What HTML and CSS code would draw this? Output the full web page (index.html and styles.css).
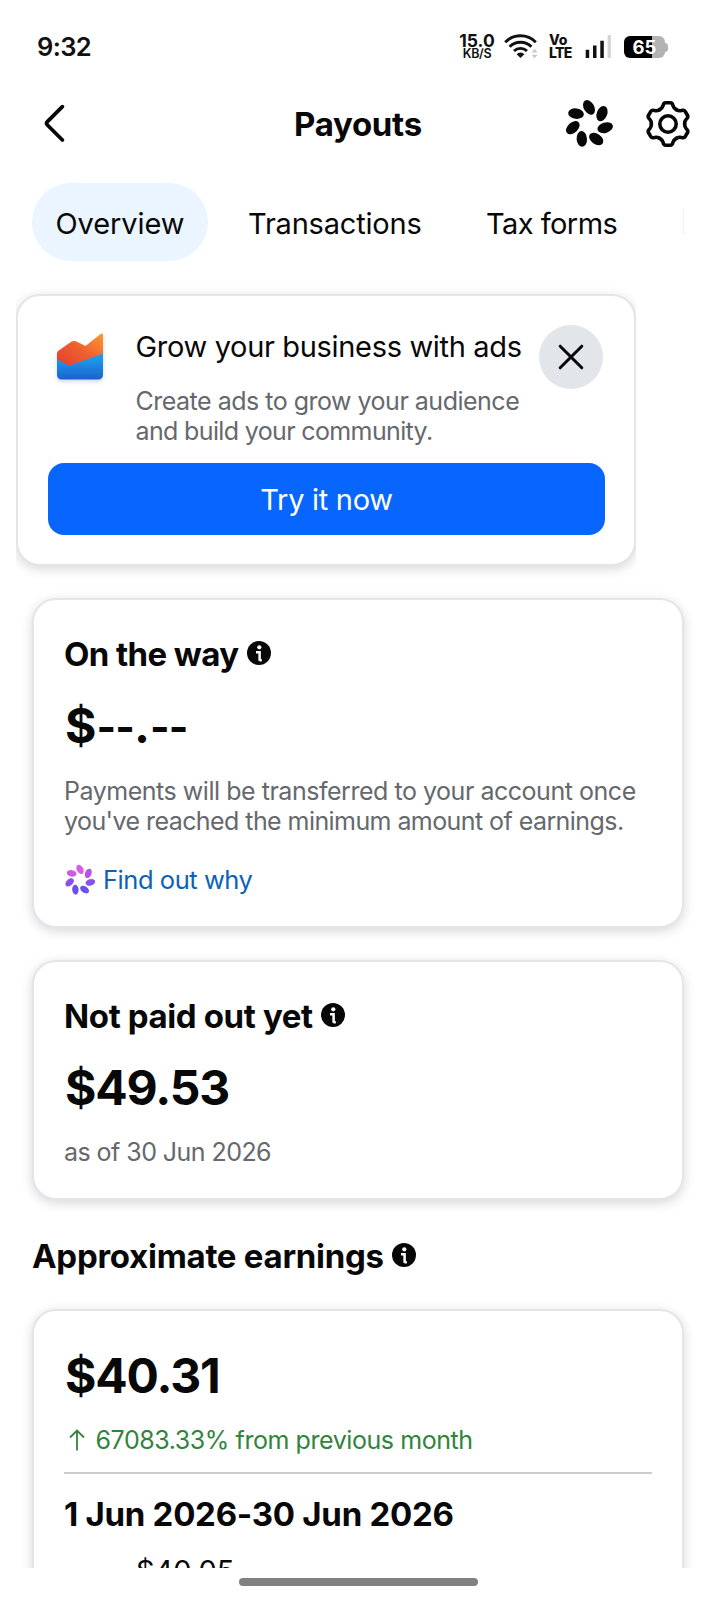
FILE: index.html
```
<!DOCTYPE html>
<html lang="en">
<head>
<meta charset="utf-8">
<title>Payouts</title>
<link rel="stylesheet" href="styles.css">
</head>
<body>
<svg class="defs" width="0" height="0" aria-hidden="true">
  <defs>
    <linearGradient id="orange" x1="0" y1="1" x2="1" y2="0"><stop offset="0.1" stop-color="#e6452f"/><stop offset="0.5" stop-color="#ee6030"/><stop offset="1" stop-color="#ff9a2e"/></linearGradient>
    <linearGradient id="blue" x1="0" y1="0" x2="0" y2="1"><stop offset="0" stop-color="#1ea0f2"/><stop offset="0.3" stop-color="#1e96ea"/><stop offset="1" stop-color="#1a62cc"/></linearGradient>
    <symbol id="info" viewBox="0 0 24 24"><circle cx="12" cy="12" r="12" fill="#080809"/><circle cx="12.300" cy="6.300" r="2.100" fill="#fff"/><path d="M9 11.300h3.600v8.400M12.600 19.300h2.200" fill="none" stroke="#fff" stroke-width="2.500"/></symbol>
    <path id="tooth" d="M-8.300-14.400Q-5.600-15.900-5-18.200Q-4.400-21.200-2.400-21.200H2.400Q4.400-21.200 5-18.200Q5.600-15.900 8.300-14.400"/>
  </defs>
</svg>
<div class="screen">
  <header class="status">
    <span class="time t">9:32</span>
    <div class="indicators">
      <div class="stack speed"><b class="t">15.0</b><span class="t">KB/S</span></div>
      <svg class="wifi" width="34" height="26" viewBox="0 0 34 26"><g fill="none" stroke="#111" stroke-width="2.9"><path d="M1.2 9.2a21.5 21.5 0 0 1 30.6 0"/><path d="M5.6 13.8a15.4 15.4 0 0 1 21.8 0"/><path d="M10 18a9.4 9.4 0 0 1 13 0"/></g><path d="M12.6 21.2a5.6 5.6 0 0 1 7.8 0L16.5 25z" fill="#111"/><path d="M27.6 19.4l3-3.6 3 3.6zM27.6 21.8l3 3.6 3-3.6z" fill="#ccc"/></svg>
      <div class="stack volte"><b class="t">Vo</b><b class="t">LTE</b></div>
      <svg class="signal" width="26" height="24" viewBox="0 0 26 24"><path d="M.7 14.8h3.5V23H.7zM8 10.4h3.5V23H8zM15.3 5.8h3.5V23h-3.5z" fill="#111"/><path d="M22.6 0h3.3v23h-3.3z" fill="#d4d4d4"/></svg>
      <div class="battery"><span class="t">65</span></div><i class="nub"></i>
    </div>
  </header>

  <nav class="appbar">
    <svg class="back" width="30" height="44" viewBox="0 0 30 44"><path d="M22.4 5.7L7.4 20.6Q5.8 22.3 7.4 24L22.4 39" fill="none" stroke="#080809" stroke-width="3.8" stroke-linecap="round"/></svg>
    <h1><span class="t">Payouts</span></h1>
    <svg class="flower" width="50" height="50" viewBox="-25 -25 50 50" fill="#080809">
      <ellipse cy="-16.6" rx="7.9" ry="5.2" transform="rotate(60 0 -16.6)"/>
      <ellipse cy="-16.6" rx="7.9" ry="5.2" transform="rotate(51.43) rotate(60 0 -16.6)"/>
      <ellipse cy="-16.6" rx="7.9" ry="5.2" transform="rotate(102.86) rotate(60 0 -16.6)"/>
      <ellipse cy="-16.6" rx="7.9" ry="5.2" transform="rotate(154.29) rotate(60 0 -16.6)"/>
      <ellipse cy="-16.6" rx="7.9" ry="5.2" transform="rotate(205.71) rotate(60 0 -16.6)"/>
      <ellipse cy="-16.6" rx="7.9" ry="5.2" transform="rotate(257.14) rotate(60 0 -16.6)"/>
      <ellipse cy="-16.6" rx="7.9" ry="5.2" transform="rotate(308.57) rotate(60 0 -16.6)"/></svg>
    <svg class="gear" width="50" height="50" viewBox="-25 -25 50 50" fill="none" stroke="#080809" stroke-width="3.6" stroke-linecap="round"><use href="#tooth"/><use href="#tooth" transform="rotate(60)"/><use href="#tooth" transform="rotate(120)"/><use href="#tooth" transform="rotate(180)"/><use href="#tooth" transform="rotate(240)"/><use href="#tooth" transform="rotate(300)"/><circle r="8.2"/></svg>
  </nav>

  <div class="tabs">
    <div class="tab active"><span class="t">Overview</span></div>
    <div class="tab tab-trans"><span class="t">Transactions</span></div>
    <div class="tab tab-tax"><span class="t">Tax forms</span></div>
    <i class="tab-edge"></i>
  </div>

  <div class="promo-clip">
    <section class="card promo">
      <div class="promo-top">
        <svg class="chart" width="47" height="48" viewBox="0 0 47 48"><path d="M0 24l13 7L46 18v24a4.5 4.5 0 0 1-4.500 4.500H4.500A4.500 4.500 0 0 1 0 42z" fill="url(#blue)"/><path d="M0 20.500Q0 18.500 1.800 17.400L13.500 9.200Q17 7 20.500 9L28.500 13L44 .7Q46 0 46 2V20.500L15 31.800Q12 33 9.500 31.500L0 26.200z" fill="url(#orange)"/></svg>
        <div class="promo-text">
          <h3><span class="t">Grow your business with ads</span></h3>
          <p class="muted"><span class="t p1">Create ads to grow your audience</span><br><span class="t p2">and build your community.</span></p>
        </div>
        <div class="close"><svg width="28" height="28" viewBox="0 0 28 28"><path d="M3.200 3.200L24.800 24.800M24.800 3.200L3.200 24.800" stroke="#080809" stroke-width="3" stroke-linecap="round"/></svg></div>
      </div>
      <div class="button"><span class="t">Try it now</span></div>
    </section>
  </div>

  <section class="card way">
    <h2><span class="t h-way">On the way</span><svg width="24" height="24"><use href="#info"/></svg></h2>
    <div class="amount"><span class="t">$<span class="dash">--</span>.<span class="dash">--</span></span></div>
    <p class="muted"><span class="t p3">Payments will be transferred to your account once</span><br><span class="t p4">you've reached the minimum amount of earnings.</span></p>
    <div class="link"><svg width="32" height="32" viewBox="-25 -25 50 50">
      <ellipse cy="-16.600" rx="7.700" ry="5" fill="#d95be6" transform="rotate(60 0 -16.6)"/>
      <ellipse cy="-16.600" rx="7.700" ry="5" fill="#b455e8" transform="rotate(51.43) rotate(60 0 -16.6)"/>
      <ellipse cy="-16.600" rx="7.700" ry="5" fill="#8a52ec" transform="rotate(102.86) rotate(60 0 -16.6)"/>
      <ellipse cy="-16.600" rx="7.700" ry="5" fill="#6a50ee" transform="rotate(154.29) rotate(60 0 -16.6)"/>
      <ellipse cy="-16.600" rx="7.700" ry="5" fill="#6a50ee" transform="rotate(205.71) rotate(60 0 -16.6)"/>
      <ellipse cy="-16.600" rx="7.700" ry="5" fill="#8a52ec" transform="rotate(257.14) rotate(60 0 -16.6)"/>
      <ellipse cy="-16.600" rx="7.700" ry="5" fill="#cc5ae6" transform="rotate(308.57) rotate(60 0 -16.6)"/></svg><span class="t">Find out why</span></div>
  </section>

  <section class="card unpaid">
    <h2><span class="t h-unpaid">Not paid out yet</span><svg width="24" height="24"><use href="#info"/></svg></h2>
    <div class="amount"><span class="t a2">$49.53</span></div>
    <p class="muted"><span class="t p5">as of 30 Jun 2026</span></p>
  </section>

  <h2 class="section-title"><span class="t h-approx">Approximate earnings</span><svg width="24" height="24"><use href="#info"/></svg></h2>

  <div class="earn-clip">
    <section class="card earn">
      <div class="amount"><span class="t a2">$40.31</span></div>
      <div class="delta"><svg width="16" height="22" viewBox="0 0 16 22"><path d="M8 21.500V2M1 8.500L8 1.500L15 8.500" fill="none" stroke="#31843c" stroke-width="1.800"/></svg><span class="t">67083.33% from previous month</span></div>
      <h2 class="period"><span class="t h-period">1 Jun 2026-30 Jun 2026</span></h2>
      <div class="row"><span class="t">$40.05</span></div>
    </section>
  </div>
  <div class="home"></div>
</div>
</body>
</html>
```
FILE: styles.css
```
* { box-sizing: border-box; }
body { margin: 0; background: #fff; color: #080809; font-family: Inter, "Noto Sans", sans-serif; }
h1, h2, h3, p { margin: 0; }
svg { display: block; flex: none; }
.defs { position: absolute; }
.t { white-space: nowrap; }
.screen { width: 716px; height: 1600px; overflow: hidden; display: flex; flex-direction: column; }

.status { height: 94px; flex: none; padding: 30px 48px 0 37px; display: flex; justify-content: space-between; align-items: flex-start; color: #111; }
.time { font-size: 25.500px; line-height: 33px; font-weight: 600; letter-spacing: -.6px; }
.indicators { display: flex; align-items: flex-start; }
.stack { display: flex; flex-direction: column; flex: none; }
.speed { width: 36px; padding-top: 3px; align-items: center; margin-right: 9px; }
.speed b { font-size: 17.500px; line-height: 15px; font-weight: 700; }
.speed span { font-size: 12.500px; line-height: 12px; font-weight: 600; letter-spacing: -.3px; }
.wifi { margin-top: 3px; }
.volte { width: 36px; padding-top: 3px; margin-left: 11px; }
.volte b { font-size: 14px; line-height: 13px; letter-spacing: -.7px; font-weight: 800; }
.volte b:first-child { letter-spacing: -.2px; }
.signal { margin-top: 5px; }
.battery { width: 41px; height: 22px; margin: 6px 0 0 13px; border-radius: 6px; background: linear-gradient(90deg, #000 69%, #b3b3b3 69%); color: #fff; font-size: 18.500px; font-weight: 700; line-height: 23px; text-align: center; flex: none; }
.nub { width: 3px; height: 9px; margin-top: 12.500px; border-radius: 0 3px 3px 0; background: #b3b3b3; }

.appbar { height: 58px; flex: none; display: flex; align-items: center; padding: 0 23px 0 40px; }
.appbar h1 { flex: 1; padding: 2px 0 0 224px; font-size: 33px; line-height: 40px; font-weight: 700; letter-spacing: -.3px; }
.gear { margin: 1px 0 0 29px; }
.flower { margin-top: 1px; }

.tabs { height: 78px; flex: none; margin: 31px 0 0 32px; display: flex; align-items: center; font-size: 29px; line-height: 36px; }
.tab { height: 78px; padding-top: 23px; flex: none; }
.active { width: 176px; padding-left: 23.500px; border-radius: 39px; background: #ebf5ff; letter-spacing: -.1px; }
.tab-trans { width: 238px; padding-left: 40px; letter-spacing: -.2px; }
.tab-tax { width: 237px; padding-left: 40px; letter-spacing: -.55px; }
.tab-edge { width: 1px; height: 26px; background: #edf1f5; }

.card { background: #fff; border: 2px solid #e3e6e9; border-radius: 24px; box-shadow: 0 3px 12px rgba(0, 0, 0, .16); }
.muted { color: #65686c; font-size: 25px; line-height: 30.500px; }
.promo-clip { margin: 20px 0 0 16px; width: 620px; height: 305px; padding-top: 13px; overflow: hidden; flex: none; }
.promo { height: 272px; padding: 29px 29px 0 30px; }
.promo-top { height: 138px; display: flex; }
.chart { margin: 8px 32px 0 8.500px; filter: drop-shadow(0 2px 2px rgba(60, 90, 160, .25)); }
.promo-text { width: 403px; padding-top: 4px; flex: none; }
h3 { font-size: 29px; line-height: 36px; font-weight: 400; margin-bottom: 20.500px; letter-spacing: -.33px; }
.close { width: 64px; height: 64px; border-radius: 50%; background: #e2e5e9; display: flex; align-items: center; justify-content: center; flex: none; }
.button { height: 72px; border-radius: 16px; background: #0866ff; color: #fff; font-size: 29px; line-height: 73px; text-align: center; letter-spacing: -.3px; }
.p1 { letter-spacing: -.5px; }
.p2 { letter-spacing: -.64px; }
.p3 { letter-spacing: -.47px; }
.p4 { letter-spacing: -.57px; }
.p5 { letter-spacing: -.55px; }

h2 { display: flex; align-items: center; gap: 8.500px; font-size: 33px; line-height: 40px; font-weight: 700; }
h2 svg { margin-bottom: 3px; }
.h-way { letter-spacing: -.6px; }
.h-unpaid { letter-spacing: -.38px; }
.h-approx { letter-spacing: -.27px; }
.h-period { letter-spacing: -.27px; }
.amount { padding-left: 1px; font-size: 48px; line-height: 56px; font-weight: 700; }
.dash { font-size: 42px; line-height: 1; letter-spacing: -.9px; vertical-align: 1px; }
.a2 { letter-spacing: -1.150px; }
.way, .unpaid { margin-left: 32px; width: 652px; flex: none; padding: 34px 30px 0; }
.way { margin-top: 12px; height: 330px; }
.way .amount { height: 56px; margin: 24px 0 21.500px; }
.link { display: flex; align-items: center; gap: 7px; margin-top: 27.500px; color: #0b62b8; font-size: 25.500px; line-height: 30px; letter-spacing: -.45px; }
.unpaid { margin-top: 32px; height: 240px; }
.unpaid .amount { margin: 23.500px 0 21px; }
.section-title { margin: 36px 0 0 32px; flex: none; }
.earn-clip { height: 308px; padding: 49px 32px 0; margin-top: -16px; overflow: hidden; flex: none; }
.earn { height: 360px; padding: 36.500px 30px 0; }
.delta { display: flex; align-items: center; gap: 10.500px; margin-top: 21px; padding: 0 0 17.500px 5px; border-bottom: 2px solid #ccc; color: #31843c; font-size: 25px; line-height: 30px; letter-spacing: -.43px; }
.period { margin-top: 20px; }
.row { margin-top: 19px; padding-left: 72px; font-size: 29px; line-height: 36px; }
.home { margin: 10px auto 0 239px; width: 239px; height: 8px; border-radius: 4px; background: #808080; flex: none; }
```
